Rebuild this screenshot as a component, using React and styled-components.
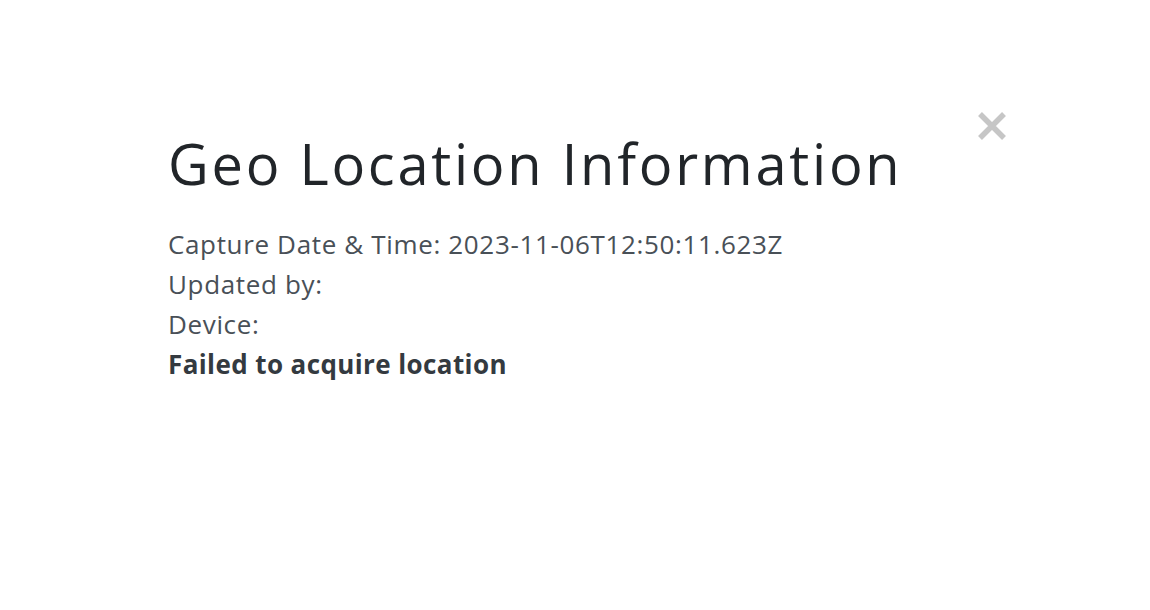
import React from "react";
import styled, { createGlobalStyle } from "styled-components";

const Global = createGlobalStyle`
  html, body { margin: 0; padding: 0; background: #fff; }
  body { font-family: "Open Sans", sans-serif; }
`;

const Page = styled.div`
  width: 1150px;
  height: 610px;
  box-sizing: border-box;
  padding: 127px 0 0 168px;
  background: #fff;
`;

const Modal = styled.div`
  width: 839px;
  display: flex;
  flex-direction: column;
`;

const Header = styled.div`
  display: flex;
  justify-content: space-between;
  align-items: flex-start;
`;

const Title = styled.h1`
  margin: 0;
  font-family: "Open Sans", sans-serif;
  font-weight: 400;
  font-size: 56px;
  line-height: 72.8px;
  color: #212529;
  letter-spacing: 2.75px;
`;

const Close = styled.button`
  border: 0;
  background: none;
  padding: 0;
  margin: -16px 0 0 0;
  width: 30px;
  height: 30px;
  display: flex;
  align-items: center;
  justify-content: center;
  cursor: pointer;
`;

const Body = styled.div`
  margin-top: 24px;
  display: flex;
  flex-direction: column;
`;

const Line = styled.div`
  font-family: "Open Sans", sans-serif;
  font-size: 26px;
  line-height: 40px;
  letter-spacing: ${(p) => (p.$strong ? "0.4px" : "0.65px")};
  color: ${(p) => (p.$strong ? "#343a40" : "#495057")};
  font-weight: ${(p) => (p.$strong ? 700 : 400)};
`;

export default function App() {
  return (
    <>
      <Global />
      <Page>
        <Modal>
          <Header>
            <Title>Geo Location Information</Title>
            <Close aria-label="Close">
              <svg width="30" height="30" viewBox="0 0 30 30">
                <path d="M3 3 L27 27 M27 3 L3 27" stroke="#c6c6c6" strokeWidth="5.5" strokeLinecap="butt" />
              </svg>
            </Close>
          </Header>
          <Body>
            <Line>Capture Date &amp; Time: 2023-11-06T12:50:11.623Z</Line>
            <Line>Updated by: </Line>
            <Line>Device: </Line>
            <Line $strong>Failed to acquire location</Line>
          </Body>
        </Modal>
      </Page>
    </>
  );
}
